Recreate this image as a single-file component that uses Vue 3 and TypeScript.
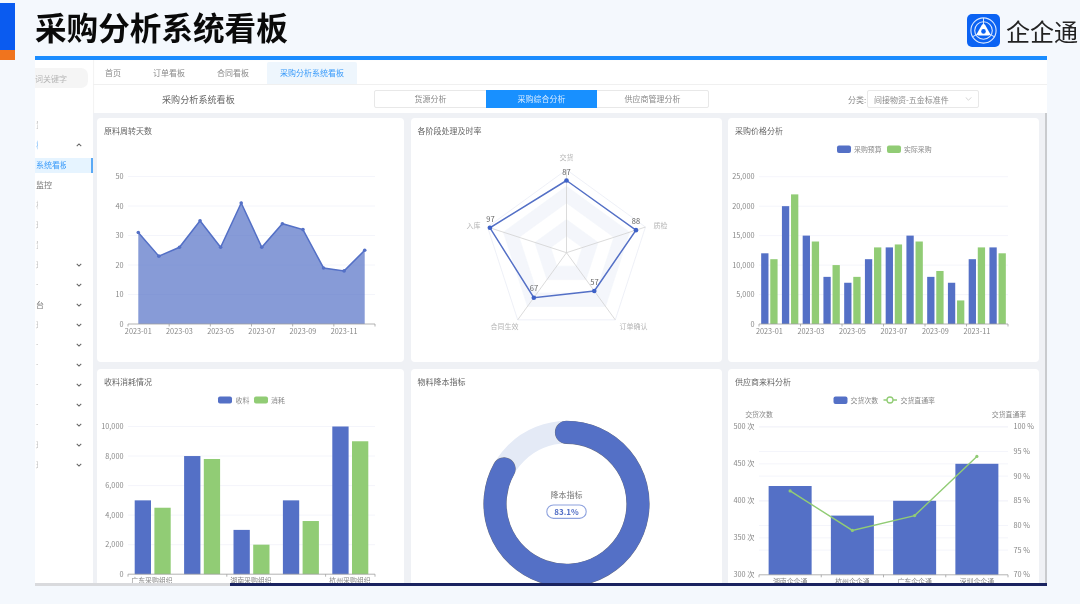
<script setup lang="ts">
const BLUE = '#5470c6'
const GREEN = '#91cc75'

function range(n: number): number[] {
  return Array.from({ length: n }, (_, i) => i)
}
function fmt(v: number): string {
  return v.toLocaleString('en-US')
}
const months = range(12).map((i) => `2023-${String(i + 1).padStart(2, '0')}`)

/* 原料周转天数 */
const a = { x0: 128, x1: 375, y0: 324, k: 2.95 }
const aBand = (a.x1 - a.x0) / 12
const aData = [31, 23, 26, 35, 26, 41, 26, 34, 32, 19, 18, 25]
const aPts = aData.map((v, i) => ({ x: a.x0 + aBand * (i + 0.5), y: a.y0 - v * a.k }))
const aLine = aPts.map((p) => `${p.x},${p.y}`).join(' ')
const aArea = `${aPts[0].x},${a.y0} ${aLine} ${aPts[11].x},${a.y0}`
const aTicks = [0, 10, 20, 30, 40, 50].map((v) => ({ v, y: a.y0 - v * a.k }))
const aLabels = range(6).map((i) => ({ t: months[i * 2], x: a.x0 + aBand * (i * 2 + 0.5) }))
const aXT = [0, 2, 4, 6, 8, 10, 12].map((i) => a.x0 + aBand * i)

/* 各阶段处理及时率 */
const cx = 566
const cy = 252.7
const R = 83
const ang = range(5).map((i) => ((-90 + i * 72) * Math.PI) / 180)
function pt(i: number, r: number): { x: number; y: number } {
  return { x: cx + r * Math.cos(ang[i]), y: cy + r * Math.sin(ang[i]) }
}
function ring(r: number): string {
  return range(5)
    .map((i) => {
      const p = pt(i, r)
      return `${p.x},${p.y}`
    })
    .join(' ')
}
const rings = [5, 4, 3, 2, 1].map((n) => ({
  pts: ring((R * n) / 5),
  fill: n % 2 === 0 ? '#f4f6fb' : '#ffffff',
  line: n === 5 ? '#e6eaf4' : '#f4f6fb',
}))
const spokes = range(5).map((i) => pt(i, R))
const rVals = [87, 88, 57, 67, 97]
const rPts = rVals.map((v, i) => pt(i, (R * v) / 100))
const rLine = rPts.map((p) => `${p.x},${p.y}`).join(' ')
const rValLabels = [
  { t: '87', x: 566, y: 175 },
  { t: '88', x: 635.5, y: 224 },
  { t: '57', x: 594, y: 285 },
  { t: '67', x: 533.5, y: 291 },
  { t: '97', x: 490, y: 222 },
]
const rNames = [
  { t: '交货', x: 566, y: 160 },
  { t: '质检', x: 660, y: 227.5 },
  { t: '订单确认', x: 633, y: 329 },
  { t: '合同生效', x: 504, y: 329 },
  { t: '入库', x: 473, y: 227.5 },
]

/* 采购价格分析 */
const p = { x0: 759, x1: 1008, y0: 324, k: 147.3 / 25000 }
const pBand = (p.x1 - p.x0) / 12
const pB = [12000, 20000, 15000, 8000, 7000, 11000, 13000, 15000, 8000, 7000, 11000, 13000]
const pG = [11000, 22000, 14000, 10000, 8000, 13000, 13500, 14000, 9000, 4000, 13000, 12000]
const pBars = pB.flatMap((v, i) => {
  const c = p.x0 + pBand * (i + 0.5)
  return [
    { x: c - 8.2, w: 7.3, y: p.y0 - v * p.k, h: v * p.k, f: BLUE },
    { x: c + 0.9, w: 7.3, y: p.y0 - pG[i] * p.k, h: pG[i] * p.k, f: GREEN },
  ]
})
const pTicks = [0, 5000, 10000, 15000, 20000, 25000].map((v) => ({ t: fmt(v), y: p.y0 - v * p.k }))
const pLabels = range(6).map((i) => ({ t: months[i * 2], x: p.x0 + pBand * (i * 2 + 0.5) }))
const pXT = [0, 2, 4, 6, 8, 10, 12].map((i) => p.x0 + pBand * i)

/* 收料消耗情况 */
const s = { x0: 128, x1: 375, y0: 573.7, k: 147.7 / 10000 }
const sBand = (s.x1 - s.x0) / 5
const sB = [5000, 8000, 3000, 5000, 10000]
const sG = [4500, 7800, 2000, 3600, 9000]
const sBars = sB.flatMap((v, i) => {
  const c = s.x0 + sBand * (i + 0.5)
  return [
    { x: c - 18, w: 16.3, y: s.y0 - v * s.k, h: v * s.k, f: BLUE },
    { x: c + 1.7, w: 16.3, y: s.y0 - sG[i] * s.k, h: sG[i] * s.k, f: GREEN },
  ]
})
const sTicks = [0, 2000, 4000, 6000, 8000, 10000].map((v) => ({ t: fmt(v), y: s.y0 - v * s.k }))
const sLabels = [
  { t: '广东采购组织', x: 152 },
  { t: '湖南采购组织', x: 251 },
  { t: '杭州采购组织', x: 350 },
]
const sXT = [0, 2, 4, 5].map((i) => s.x0 + sBand * i)

/* 物料降本指标 */
const dC = { x: 566, y: 503.3, r: 71.5 }
const dEnd = ((0.831 * 360 - 90) * Math.PI) / 180
const dPath = `M ${dC.x} ${dC.y - dC.r} A ${dC.r} ${dC.r} 0 1 1 ${dC.x + dC.r * Math.cos(dEnd)} ${dC.y + dC.r * Math.sin(dEnd)}`

/* 供应商来料分析 */
const q = { x0: 759, x1: 1008, y0: 574.3, top: 426.3 }
const qH = q.y0 - q.top
const qBand = (q.x1 - q.x0) / 4
const qNames = ['湖南企企通', '杭州企企通', '广东企企通', '深圳企企通']
const qBars = [420, 380, 400, 450].map((v, i) => {
  const h = ((v - 300) / 200) * qH
  return { x: q.x0 + qBand * (i + 0.5) - 21.5, w: 43, y: q.y0 - h, h }
})
const qPts = [87, 79, 82, 94].map((v, i) => ({
  x: q.x0 + qBand * (i + 0.5),
  y: q.y0 - ((v - 70) / 30) * qH,
}))
const qLine = qPts.map((o) => `${o.x},${o.y}`).join(' ')
const qLeft = [300, 350, 400, 450, 500].map((v) => ({ t: `${v} 次`, y: q.y0 - ((v - 300) / 200) * qH }))
const qRight = [70, 75, 80, 85, 90, 95, 100].map((v) => ({ t: `${v} %`, y: q.y0 - ((v - 70) / 30) * qH }))
const qXT = range(5).map((i) => q.x0 + qBand * i)

/* 侧边菜单 */
interface MenuRow {
  label: string
  clip: number
  state: string
  chev: string
}
const menu: MenuRow[] = [
  { label: '置', clip: 1.5, state: 'faint', chev: '' },
  { label: '板', clip: 1.5, state: 'blue', chev: 'up' },
  { label: '系统看板', clip: 30, state: 'active', chev: '' },
  { label: '监控', clip: 20, state: '', chev: '' },
  { label: '析', clip: 1.5, state: 'faint', chev: '' },
  { label: '理', clip: 1.5, state: 'faint', chev: '' },
  { label: '置', clip: 1.5, state: 'faint', chev: '' },
  { label: '理', clip: 1.5, state: 'faint', chev: 'down' },
  { label: '一', clip: 1.5, state: 'faint', chev: 'down' },
  { label: '台', clip: 9, state: '', chev: 'down' },
  { label: '理', clip: 1.5, state: 'faint', chev: 'down' },
  { label: '一', clip: 1.5, state: 'faint', chev: 'down' },
  { label: '一', clip: 1.5, state: 'faint', chev: 'down' },
  { label: '一', clip: 1.5, state: 'faint', chev: 'down' },
  { label: '一', clip: 1.5, state: 'faint', chev: 'down' },
  { label: '一', clip: 1.5, state: 'faint', chev: 'down' },
  { label: '理', clip: 1.5, state: 'faint', chev: 'down' },
  { label: '理', clip: 1.5, state: 'faint', chev: 'down' },
]
const tabs = ['首页', '订单看板', '合同看板']
</script>

<template>
  <div class="page">
    <div class="stripe">
      <div class="stripe-blue"></div>
      <div class="stripe-orange"></div>
    </div>
    <div class="right">
      <header class="head">
        <h1 class="title">采购分析系统看板</h1>
        <div class="brand">
          <svg class="logo" viewBox="0 0 33 33" width="33" height="33">
            <rect width="33" height="33" rx="5" fill="#0b63f3" />
            <g fill="none" stroke="#fff" opacity="0.85">
              <circle cx="16.5" cy="16.5" r="12.6" stroke-width="1.1" />
              <circle cx="16.5" cy="16.5" r="8.8" stroke-width="1.1" />
              <line x1="16.5" y1="4" x2="16.5" y2="11" stroke-width="1" />
              <line x1="5.7" y1="22.7" x2="11.5" y2="19.6" stroke-width="1" />
              <line x1="27.3" y1="22.7" x2="21.5" y2="19.6" stroke-width="1" />
            </g>
            <path d="M16.5 10 Q17.6 10 18.2 11 L23 19.4 Q23.6 21.4 21.6 21.6 L11.4 21.6 Q9.4 21.4 10 19.4 L14.8 11 Q15.4 10 16.5 10 Z" fill="#fff" />
            <circle cx="16.5" cy="17.4" r="2.3" fill="#0b63f3" />
          </svg>
          <span class="brand-name">企企通</span>
        </div>
      </header>

      <section class="panel">
        <div class="panel-body">
          <aside class="side">
            <div class="search"><span class="search-text">词关键字</span></div>
            <ul class="menu">
              <li v-for="(row, i) in menu" :key="i" class="row" :class="row.state">
                <span class="row-label" :style="{ width: row.clip + 'px' }">{{ row.label }}</span>
                <svg v-if="row.chev" class="chev" :class="row.chev" viewBox="0 0 8 5" width="6" height="4">
                  <path d="M1 1 L4 4 L7 1" fill="none" stroke="#666" stroke-width="1.4" />
                </svg>
              </li>
            </ul>
          </aside>

          <div class="main">
            <nav class="tabs">
              <span v-for="t in tabs" :key="t" class="tab">{{ t }}</span>
              <span class="tab on">采购分析系统看板</span>
            </nav>
            <div class="bar">
              <div class="bar-title">采购分析系统看板</div>
              <div class="seg">
                <span class="seg-item">货源分析</span>
                <span class="seg-item on">采购综合分析</span>
                <span class="seg-item">供应商管理分析</span>
              </div>
              <div class="filter">
                <span class="filter-label">分类:</span>
                <div class="select">
                  <span>间接物资-五金标准件</span>
                  <svg viewBox="0 0 8 5" width="7" height="4">
                    <path d="M.5 .5 L4 4 L7.5 .5" fill="none" stroke="#bbb" stroke-width=".8" />
                  </svg>
                </div>
              </div>
            </div>

            <div class="board">
              <div class="grid">
                <article class="card">
                  <div class="card-title">原料周转天数</div>
                  <svg class="chart" viewBox="97 144 307 218">
                    <line v-for="t in aTicks.slice(1)" :key="t.v" :x1="a.x0" :x2="a.x1" :y1="t.y" :y2="t.y" class="grid-line" />
                    <text v-for="t in aTicks" :key="'l' + t.v" x="123.5" :y="t.y + 2.6" class="tick end">{{ t.v }}</text>
                    <polygon :points="aArea" fill="#5470c6" fill-opacity="0.7" />
                    <polyline :points="aLine" fill="none" :stroke="BLUE" stroke-width="1.5" />
                    <circle v-for="(o, i) in aPts" :key="i" :cx="o.x" :cy="o.y" r="1.8" :fill="BLUE" />
                    <line :x1="a.x0" :x2="a.x1" :y1="a.y0" :y2="a.y0" class="axis" />
                    <line v-for="x in aXT" :key="x" :x1="x" :x2="x" :y1="a.y0" :y2="a.y0 + 2.5" class="axis" />
                    <text v-for="t in aLabels" :key="t.t" :x="t.x" :y="a.y0 + 9.5" class="tick mid">{{ t.t }}</text>
                  </svg>
                </article>

                <article class="card">
                  <div class="card-title">各阶段处理及时率</div>
                  <svg class="chart" viewBox="410.5 144 311 218">
                    <polygon v-for="(o, i) in rings" :key="i" :points="o.pts" :fill="o.fill" :stroke="o.line" stroke-width=".7" />
                    <line v-for="(o, i) in spokes" :key="'s' + i" :x1="cx" :y1="cy" :x2="o.x" :y2="o.y" stroke="#d2d2d2" stroke-width=".8" />
                    <polygon :points="rLine" fill="none" :stroke="BLUE" stroke-width="1.5" />
                    <circle v-for="(o, i) in rPts" :key="'p' + i" :cx="o.x" :cy="o.y" r="2.3" fill="#3f62c8" />
                    <text v-for="o in rValLabels" :key="o.t" :x="o.x" :y="o.y" class="val mid">{{ o.t }}</text>
                    <text v-for="o in rNames" :key="o.t" :x="o.x" :y="o.y" class="rname mid">{{ o.t }}</text>
                  </svg>
                </article>

                <article class="card">
                  <div class="card-title">采购价格分析</div>
                  <svg class="chart" viewBox="728 144 311 218">
                    <rect x="837" y="145.5" width="14" height="7.5" rx="2" :fill="BLUE" />
                    <text x="854" y="151.7" class="tick leg">采购预算</text>
                    <rect x="887" y="145.5" width="14" height="7.5" rx="2" :fill="GREEN" />
                    <text x="904" y="151.7" class="tick leg">实际采购</text>
                    <line v-for="t in pTicks.slice(1)" :key="t.t" :x1="p.x0" :x2="p.x1" :y1="t.y" :y2="t.y" class="grid-line" />
                    <text v-for="t in pTicks" :key="'l' + t.t" x="754.5" :y="t.y + 2.6" class="tick end">{{ t.t }}</text>
                    <rect v-for="(b, i) in pBars" :key="i" :x="b.x" :y="b.y" :width="b.w" :height="b.h" :fill="b.f" />
                    <line :x1="p.x0" :x2="p.x1" :y1="p.y0" :y2="p.y0" class="axis" />
                    <line v-for="x in pXT" :key="x" :x1="x" :x2="x" :y1="p.y0" :y2="p.y0 + 2.5" class="axis" />
                    <text v-for="t in pLabels" :key="t.t" :x="t.x" :y="p.y0 + 9.5" class="tick mid">{{ t.t }}</text>
                  </svg>
                </article>

                <article class="card">
                  <div class="card-title">收料消耗情况</div>
                  <svg class="chart" viewBox="97 394.5 307 218">
                    <rect x="218" y="396" width="14" height="7" rx="2" :fill="BLUE" />
                    <text x="235.5" y="402" class="tick leg">收料</text>
                    <rect x="254" y="396" width="14" height="7" rx="2" :fill="GREEN" />
                    <text x="271" y="402" class="tick leg">消耗</text>
                    <line v-for="t in sTicks.slice(1)" :key="t.t" :x1="s.x0" :x2="s.x1" :y1="t.y" :y2="t.y" class="grid-line" />
                    <text v-for="t in sTicks" :key="'l' + t.t" x="123.5" :y="t.y + 2.6" class="tick end">{{ t.t }}</text>
                    <rect v-for="(b, i) in sBars" :key="i" :x="b.x" :y="b.y" :width="b.w" :height="b.h" :fill="b.f" />
                    <line :x1="s.x0" :x2="s.x1" :y1="s.y0" :y2="s.y0" class="axis" />
                    <line v-for="x in sXT" :key="x" :x1="x" :x2="x" :y1="s.y0" :y2="s.y0 + 2.5" class="axis" />
                    <text v-for="t in sLabels" :key="t.t" :x="t.x" :y="s.y0 + 9" class="tick mid leg">{{ t.t }}</text>
                  </svg>
                </article>

                <article class="card">
                  <div class="card-title">物料降本指标</div>
                  <svg class="chart" viewBox="410.5 394.5 311 218">
                    <circle :cx="dC.x" :cy="dC.y" :r="dC.r" fill="none" stroke="#e4eaf6" stroke-width="22.5" />
                    <path :d="dPath" fill="none" stroke="#6a6f80" stroke-width="23.2" stroke-linecap="round" />
                    <path :d="dPath" fill="none" :stroke="BLUE" stroke-width="22.4" stroke-linecap="round" />
                    <text x="566" y="497" class="dname mid">降本指标</text>
                    <rect x="546.3" y="504.5" width="39.4" height="13.4" rx="6.7" fill="#fff" stroke="#8ea2de" stroke-width="1.1" />
                    <text x="566" y="514.5" class="dval mid">83.1%</text>
                  </svg>
                </article>

                <article class="card">
                  <div class="card-title">供应商来料分析</div>
                  <svg class="chart" viewBox="728 394.5 311 218">
                    <rect x="833.5" y="396" width="14" height="7.5" rx="2" :fill="BLUE" />
                    <text x="850.5" y="402.2" class="tick leg">交货次数</text>
                    <line x1="883.5" x2="897" y1="399.5" y2="399.5" :stroke="GREEN" stroke-width="1.3" />
                    <circle cx="890" cy="399.5" r="3" fill="#fff" :stroke="GREEN" stroke-width="1.3" />
                    <text x="900.5" y="402.2" class="tick leg">交货直通率</text>
                    <text x="759" y="416" class="tick mid leg">交货次数</text>
                    <text x="1009" y="416" class="tick mid leg">交货直通率</text>
                    <line v-for="t in qLeft.slice(1)" :key="t.t" :x1="q.x0" :x2="q.x1" :y1="t.y" :y2="t.y" class="grid-line" />
                    <line v-for="t in qRight.slice(1)" :key="t.t" :x1="q.x0" :x2="q.x1" :y1="t.y" :y2="t.y" class="grid-line" />
                    <text v-for="t in qLeft" :key="'l' + t.t" x="754.5" :y="t.y + 2.6" class="tick end">{{ t.t }}</text>
                    <text v-for="t in qRight" :key="'r' + t.t" x="1013.5" :y="t.y + 2.6" class="tick">{{ t.t }}</text>
                    <rect v-for="(b, i) in qBars" :key="i" :x="b.x" :y="b.y" :width="b.w" :height="b.h" :fill="BLUE" />
                    <line :x1="q.x0" :x2="q.x1" :y1="q.y0" :y2="q.y0" class="axis" />
                    <line v-for="x in qXT" :key="x" :x1="x" :x2="x" :y1="q.y0" :y2="q.y0 + 2.5" class="axis" />
                    <text v-for="(n, i) in qNames" :key="n" :x="q.x0 + qBand * (i + 0.5)" :y="q.y0 + 9" class="tick mid leg">{{ n }}</text>
                    <polyline :points="qLine" fill="none" :stroke="GREEN" stroke-width="1.4" />
                    <circle v-for="(o, i) in qPts" :key="i" :cx="o.x" :cy="o.y" r="1.6" :fill="GREEN" />
                  </svg>
                </article>
              </div>
              <div class="scroll"></div>
            </div>
          </div>
        </div>
        <div class="foot">
          <div class="foot-gray"></div>
          <div class="foot-navy"></div>
        </div>
      </section>
    </div>
  </div>
</template>

<style>
html,
body {
  margin: 0;
  padding: 0;
  background: #f4f8fd;
}
</style>

<style scoped>
.page {
  width: 1080px;
  height: 604px;
  display: flex;
  overflow: hidden;
  background: #f4f8fd;
  font-family: "Noto Sans CJK SC", "Noto Sans", sans-serif;
  filter: blur(0.45px);
}
.stripe {
  width: 15px;
  margin-right: 20px;
  padding-top: 3px;
  flex: none;
}
.stripe-blue {
  height: 47px;
  background: #0a5bf0;
}
.stripe-orange {
  height: 10px;
  background: #f0741e;
}
.right {
  flex: 1;
  min-width: 0;
}
.head {
  height: 56px;
  display: flex;
  align-items: flex-start;
}
.title {
  margin: 7px 0 0 0;
  font-size: 31.6px;
  line-height: 38px;
  font-weight: 700;
  color: #0a0a0a;
  white-space: nowrap;
}
.brand {
  margin-left: auto;
  padding-top: 14px;
  display: flex;
  align-items: center;
  width: 113px;
  flex: none;
}
.logo {
  flex: none;
}
.brand-name {
  margin-left: 6px;
  font-size: 24px;
  line-height: 33px;
  color: #222;
  white-space: nowrap;
}
.panel {
  width: 1012px;
  height: 530px;
  display: flex;
  flex-direction: column;
  background: #fff;
  border-top: 4px solid #1a8cff;
  box-sizing: border-box;
}
.panel-body {
  flex: 1;
  min-height: 0;
  display: flex;
}
.foot {
  height: 3px;
  display: flex;
  flex: none;
}
.foot-gray {
  width: 195px;
  background: #d9dadd;
}
.foot-navy {
  flex: 1;
  background: #1a2360;
}
.side {
  width: 58px;
  flex: none;
  overflow: hidden;
  padding-top: 8px;
  box-sizing: border-box;
}
.search {
  width: 53px;
  height: 20px;
  border-radius: 0 7px 7px 0;
  background: #f5f5f5;
  display: flex;
  align-items: center;
}
.search-text {
  font-size: 8px;
  color: #b5b5b5;
}
.menu {
  list-style: none;
  margin: 27px 0 0;
  padding: 0;
}
.row {
  position: relative;
  height: 20px;
  display: flex;
  align-items: center;
  font-size: 8px;
  color: #777;
}
.row-label {
  overflow: hidden;
  white-space: nowrap;
  line-height: 14px;
  padding-left: 1px;
}
.row.faint {
  color: #c4c4c4;
}
.row.blue {
  color: #8cc4fb;
}
.row.active {
  height: 15px;
  margin: 2.5px 0;
  color: #3a9bfa;
  background: #e6f4ff;
  box-shadow: inset -2px 0 0 #5aa9f5;
}
.chev {
  position: absolute;
  left: 41px;
  top: 8px;
}
.chev.up {
  transform: rotate(180deg);
}
.main {
  flex: 1;
  min-width: 0;
  display: flex;
  flex-direction: column;
  box-shadow: inset 1px 0 1px #f2f2f2;
}
.tabs {
  height: 25px;
  display: flex;
  align-items: flex-end;
  border-bottom: 1px solid #f0f0f0;
  box-sizing: border-box;
  flex: none;
}
.tab {
  width: 64px;
  height: 22px;
  line-height: 22px;
  text-align: center;
  font-size: 8px;
  color: #8a8a8a;
}
.tab:first-child {
  width: 40px;
  padding-right: 4px;
}
.tab.on {
  width: 90px;
  margin-left: 2px;
  color: #3a9bfa;
  background: #eef6fd;
  border-radius: 2px 2px 0 0;
}
.bar {
  height: 28px;
  flex: none;
  display: flex;
  align-items: center;
  font-size: 8px;
  color: #8a8a8a;
}
.bar-title {
  width: 281px;
  padding-left: 69px;
  box-sizing: border-box;
  font-size: 9.1px;
  color: #666;
  white-space: nowrap;
}
.seg {
  display: flex;
  height: 18px;
  width: 335px;
  border: 1px solid #e8e8e8;
  border-radius: 2px;
  box-sizing: border-box;
}
.seg-item {
  flex: 1;
  line-height: 16px;
  text-align: center;
  white-space: nowrap;
}
.seg-item.on {
  background: #1890ff;
  color: #d6eaff;
  margin: -1px 0;
  line-height: 18px;
}
.filter {
  margin-left: 139px;
  display: flex;
  align-items: center;
}
.filter-label {
  width: 19px;
  white-space: nowrap;
}
.select {
  width: 112px;
  height: 18px;
  border: 1px solid #e8e8e8;
  border-radius: 2px;
  box-sizing: border-box;
  padding: 0 6px;
  display: flex;
  align-items: center;
  justify-content: space-between;
  white-space: nowrap;
}
.board {
  flex: 1;
  min-height: 0;
  background: #eff1f5;
  overflow: hidden;
  display: flex;
  justify-content: space-between;
}
.grid {
  padding: 5px 0 0 4px;
  display: grid;
  grid-template-columns: 307px 311px 311px;
  grid-template-rows: 244px 244px;
  column-gap: 6.5px;
  row-gap: 6.5px;
}
.scroll {
  width: 2.5px;
  background: #c9cbce;
  flex: none;
}
.card {
  background: #fff;
  border-radius: 4px;
  overflow: hidden;
  height: 244px;
}
.card-title {
  height: 26px;
  line-height: 26px;
  padding-left: 7px;
  font-size: 8px;
  color: #666;
}
.chart {
  display: block;
  width: 100%;
  height: 218px;
}
.grid-line {
  stroke: #f1f3fa;
  stroke-width: 0.8;
}
.axis {
  stroke: #a0a0a0;
  stroke-width: 0.8;
}
.tick {
  font-size: 7.3px;
  fill: #878787;
}
.leg {
  font-size: 6.9px;
}
.end {
  text-anchor: end;
}
.mid {
  text-anchor: middle;
}
.val {
  font-size: 7.5px;
  fill: #666;
}
.rname {
  font-size: 7px;
  fill: #b5b5b5;
}
.dname {
  font-size: 8px;
  fill: #777;
}
.dval {
  font-size: 8px;
  font-weight: 700;
  fill: #5470c6;
}
</style>
